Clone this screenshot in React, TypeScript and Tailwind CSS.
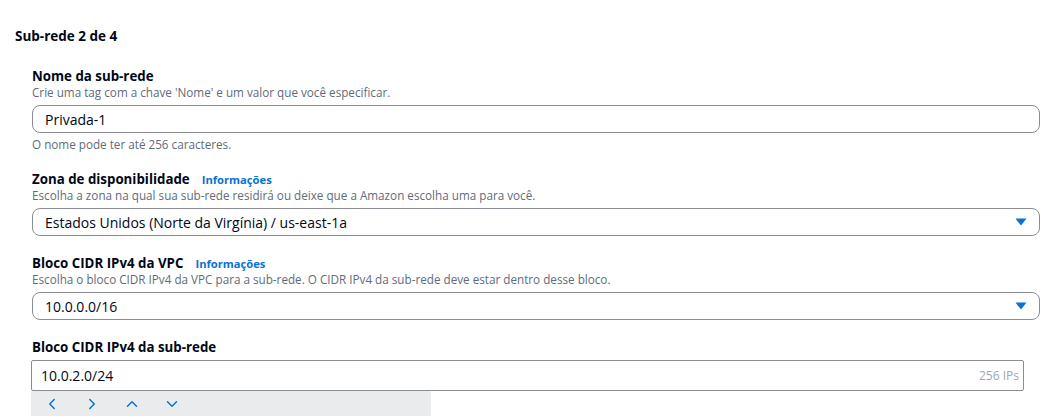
import { ChevronLeft, ChevronRight, ChevronUp, ChevronDown } from "lucide-react";

function Label({ text, info }: { text: string; info?: boolean }) {
  return (
    <div className="flex items-baseline gap-[12px] h-[20px] pt-[4px] leading-[16px]">
      <span className="text-[13.3px] font-bold text-[#000716]">{text}</span>
      {info && (
        <span className="text-[11.2px] font-bold text-[#0972d3]">Informações</span>
      )}
    </div>
  );
}

function Desc({ text }: { text: string }) {
  return <div className="text-[11.7px] leading-[16px] text-[#5f6b7a]">{text}</div>;
}

function Select({ value }: { value: string }) {
  return (
    <div className="mt-[5px] flex items-center justify-between h-[28px] w-[1008px] rounded-[8px] border border-[#8c8c94] pl-[12px] pr-[12px]">
      <span className="text-[14px] text-[#000716]">{value}</span>
      <svg width="12" height="8" viewBox="0 0 12 8">
        <path d="M0.5 0.5 H11.5 L6 7.5 Z" fill="#0972d3" />
      </svg>
    </div>
  );
}

export default function App() {
  return (
    <div
      className="w-[1054px] h-[417px] overflow-hidden bg-white"
      style={{ fontFamily: '"Open Sans", "Noto Sans", sans-serif' }}
    >
      <div className="pl-[15px] pt-[27px]">
        <h2 className="text-[13.5px] font-bold text-[#000716] leading-[18px]">Sub-rede 2 de 4</h2>
      </div>

      <div className="pl-[32px] pt-[19px] flex flex-col">
        <Label text="Nome da sub-rede" />
        <Desc text="Crie uma tag com a chave 'Nome' e um valor que você especificar." />
        <div className="mt-[5px] flex items-center h-[28px] w-[1008px] rounded-[8px] border border-[#8c8c94] px-[12px]">
          <span className="text-[14px] text-[#000716]">Privada-1</span>
        </div>
        <div className="mt-[3px]">
          <Desc text="O nome pode ter até 256 caracteres." />
        </div>

        <div className="mt-[15px]">
          <Label text="Zona de disponibilidade" info />
          <Desc text="Escolha a zona na qual sua sub-rede residirá ou deixe que a Amazon escolha uma para você." />
          <Select value="Estados Unidos (Norte da Virgínia) / us-east-1a" />
        </div>

        <div className="mt-[15px]">
          <Label text="Bloco CIDR IPv4 da VPC" info />
          <Desc text="Escolha o bloco CIDR IPv4 da VPC para a sub-rede. O CIDR IPv4 da sub-rede deve estar dentro desse bloco." />
          <Select value="10.0.0.0/16" />
        </div>

        <div className="mt-[15px]">
          <Label text="Bloco CIDR IPv4 da sub-rede" />
          <div className="-ml-[1px] mt-[5px] flex items-center justify-between h-[31px] w-[993px] rounded-[2px] border border-[#8c8c94] pl-[9px] pr-[4px]">
            <span className="text-[14px] text-[#000716]">10.0.2.0/24</span>
            <span className="text-[12px] text-[#9ba7b6]">256 IPs</span>
          </div>
          <div className="-ml-[1px] flex items-center h-[25px] w-[400px] bg-[#e9ebed] pl-[12px] gap-[22px] text-[#0972d3]">
            <ChevronLeft size={18} strokeWidth={2} />
            <ChevronRight size={18} strokeWidth={2} />
            <ChevronUp size={18} strokeWidth={2} />
            <ChevronDown size={18} strokeWidth={2} />
          </div>
        </div>
      </div>
    </div>
  );
}
